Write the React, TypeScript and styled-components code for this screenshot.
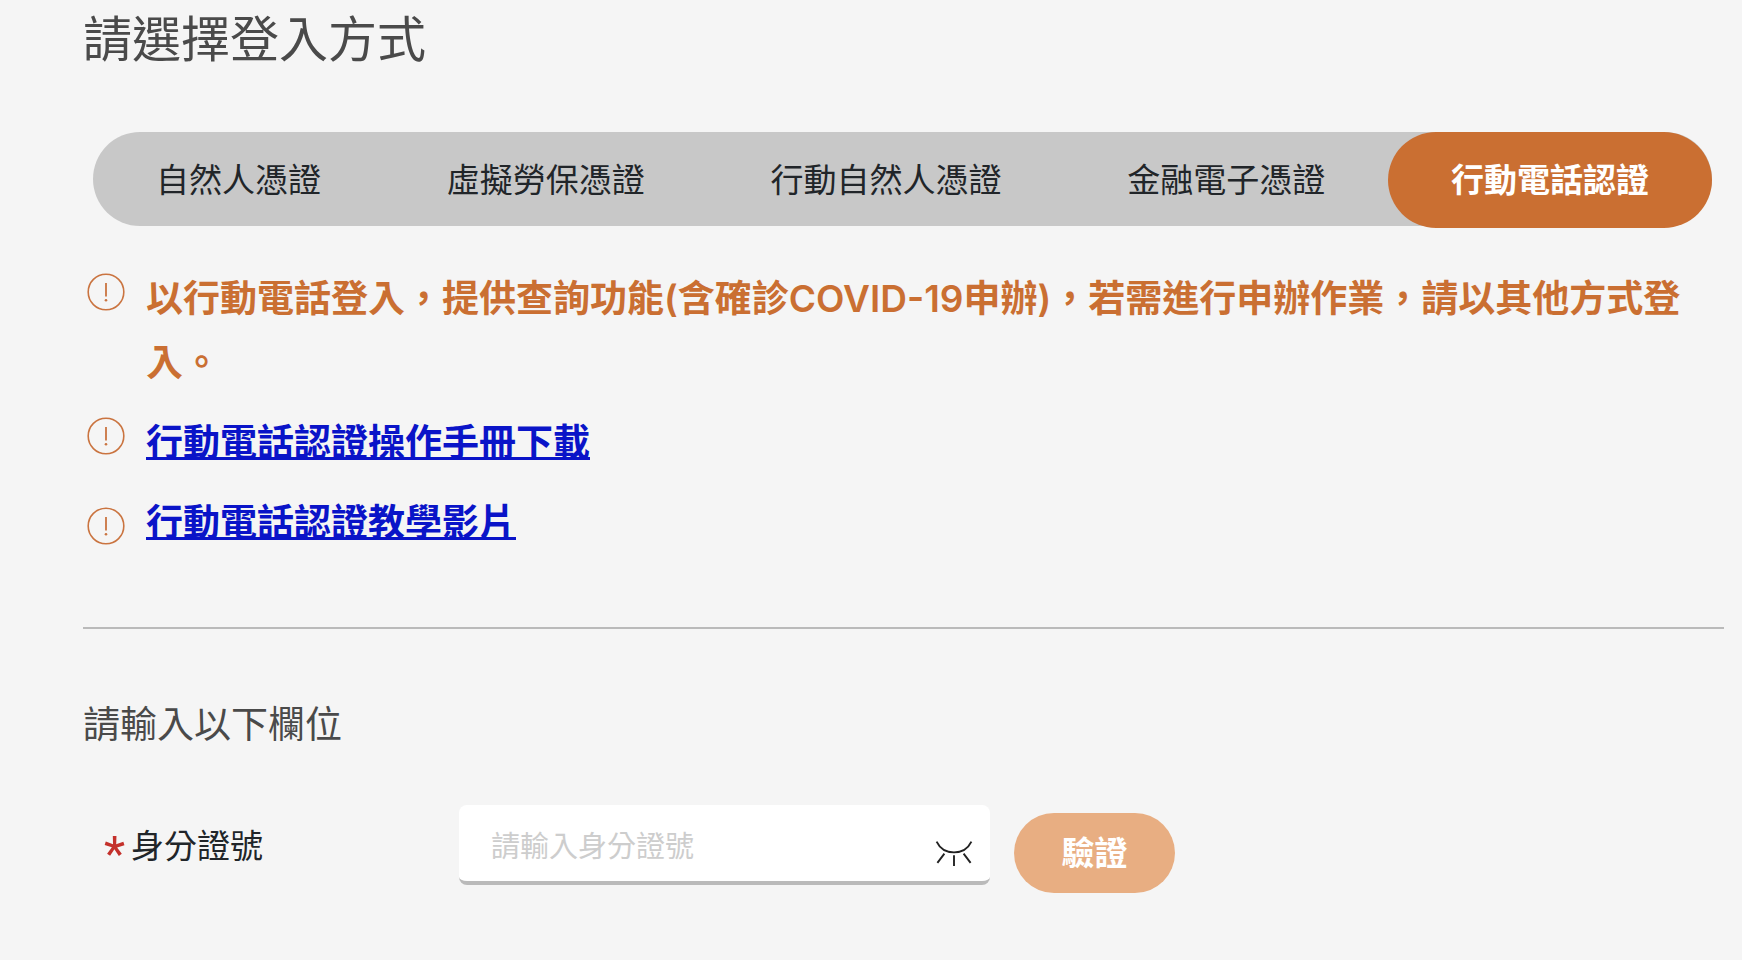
import React, { useState } from 'react';
import styled, { createGlobalStyle, css } from 'styled-components';

const GlobalStyle = createGlobalStyle`
  *, *::before, *::after { box-sizing: border-box; }
  body {
    margin: 0;
    background: #f5f5f5;
    color: #212529;
    font-family: Inter, "Noto Sans CJK TC", sans-serif;
    font-size: 33px;
    line-height: 48px;
  }
  button, input { font: inherit; }
`;

const Page = styled.main`
  padding: 0 18px 64px 83px;
`;

const Title = styled.h1`
  margin: 0;
  padding-top: 4px;
  font-size: 49px;
  font-weight: 400;
  line-height: 72px;
  color: #4a4a4a;
`;

const Tabs = styled.div`
  display: flex;
  height: 94px;
  margin: 56px 12px 0 10px;
  border-radius: 47px;
  background: #c8c8c8;
`;

const Tab = styled.button<{ $active: boolean }>`
  flex: 1 1 auto;
  height: 96px;
  padding: 0 62px;
  border: 0;
  border-radius: 48px;
  background: none;
  color: #212529;
  white-space: nowrap;
  cursor: pointer;
  ${({ $active }) =>
    $active &&
    css`
      background: #ca6f32;
      color: #fff;
      font-weight: 700;
    `}
`;

const Notices = styled.ul`
  display: flex;
  flex-direction: column;
  gap: 16px;
  margin: 0;
  padding: 41px 18px 62px 4px;
  border-bottom: 2px solid #bababa;
  list-style: none;
`;

const Notice = styled.li<{ $tall?: boolean }>`
  display: flex;
  align-items: flex-start;
  gap: 21px;
  min-height: ${({ $tall }) => ($tall ? '74px' : '64px')};
  color: #ca6f32;
  font-size: 37px;
  font-weight: 600;
  line-height: 64px;
`;

const IconSlot = styled.span<{ $tall?: boolean }>`
  display: flex;
  flex: none;
  align-items: center;
  height: ${({ $tall }) => ($tall ? '70px' : '50px')};
`;

const NoticeLink = styled.a`
  color: #0a14c8;
  text-decoration: underline;
  text-decoration-thickness: 3px;
  text-decoration-skip-ink: none;
  text-underline-offset: 1px;
`;

const Subtitle = styled.h2`
  margin: 68px 0 0;
  font-size: 37px;
  font-weight: 400;
  line-height: 56px;
  color: #4a4a4a;
`;

const FieldRow = styled.form`
  display: flex;
  align-items: flex-start;
  margin-top: 52px;
`;

const FieldLabel = styled.label`
  display: flex;
  flex: none;
  align-items: center;
  gap: 6px;
  width: 376px;
  height: 82px;
  padding-left: 21px;
`;

const Required = styled.span`
  height: 48px;
  color: #c4302b;
  font-family: Roboto, sans-serif;
  font-size: 49px;
  line-height: 64px;
`;

const InputBox = styled.div`
  display: flex;
  flex: 0 1 531px;
  align-items: center;
  min-width: 0;
  height: 80px;
  padding: 0 17px 0 32px;
  border-bottom: 4px solid #bababa;
  border-radius: 8px;
  background: #fff;
`;

const TextInput = styled.input`
  flex: 1;
  width: 100%;
  min-width: 0;
  padding: 8px 0 0;
  border: 0;
  outline: 0;
  background: none;
  color: #212529;
  font-size: 29px;
  &::placeholder { color: #cdcdcd; opacity: 1; }
`;

const EyeButton = styled.button`
  display: flex;
  flex: none;
  padding: 22px 0 0;
  border: 0;
  background: none;
  color: #222;
  cursor: pointer;
`;

const VerifyButton = styled.button`
  flex: none;
  width: 161px;
  height: 80px;
  margin: 8px 0 0 24px;
  padding: 0;
  border: 0;
  border-radius: 40px;
  background: #e8ae82;
  color: #fff;
  font-weight: 600;
  cursor: pointer;
`;

const AlertIcon = () => (
  <svg width="38" height="38" viewBox="0 0 38 38" fill="none" stroke="#ca7440" aria-hidden="true">
    <circle cx="19" cy="19" r="17.8" strokeWidth="1.6" />
    <path d="M19 10V23.5" strokeWidth="1.8" />
    <circle cx="19" cy="27.3" r="1.3" fill="#ca7440" stroke="none" />
  </svg>
);

const ClosedEyeIcon = () => (
  <svg width="38" height="26" viewBox="0 0 38 26" fill="none" stroke="currentColor" strokeWidth="1.9" aria-hidden="true">
    <path d="M1.6 .6C5 7.6 11 11.4 19 11.4S33 7.6 36.4 .6" />
    <path d="M9.4 12.6L2.4 21.8M19 14.2V25M28.6 12.6L35.6 21.8" />
  </svg>
);

const methods = ['自然人憑證', '虛擬勞保憑證', '行動自然人憑證', '金融電子憑證', '行動電話認證'];

export default function App() {
  const [active, setActive] = useState(methods.length - 1);
  const [idNumber, setIdNumber] = useState('');
  const [visible, setVisible] = useState(false);

  return (
    <Page lang="zh-Hant">
      <GlobalStyle />
      <Title>請選擇登入方式</Title>
      <Tabs role="tablist">
        {methods.map((name, i) => (
          <Tab key={name} type="button" role="tab" aria-selected={i === active} $active={i === active} onClick={() => setActive(i)}>
            {name}
          </Tab>
        ))}
      </Tabs>
      <Notices>
        <Notice>
          <IconSlot><AlertIcon /></IconSlot>
          <span>以行動電話登入，提供查詢功能(含確診COVID-19申辦)，若需進行申辦作業，請以其他方式登入。</span>
        </Notice>
        <Notice>
          <IconSlot><AlertIcon /></IconSlot>
          <NoticeLink href="#manual">行動電話認證操作手冊下載</NoticeLink>
        </Notice>
        <Notice $tall>
          <IconSlot $tall><AlertIcon /></IconSlot>
          <NoticeLink href="#video">行動電話認證教學影片</NoticeLink>
        </Notice>
      </Notices>
      <Subtitle>請輸入以下欄位</Subtitle>
      <FieldRow onSubmit={(e) => e.preventDefault()}>
        <FieldLabel htmlFor="id-number">
          <Required>*</Required>
          身分證號
        </FieldLabel>
        <InputBox>
          <TextInput
            id="id-number"
            type={visible || !idNumber ? 'text' : 'password'}
            placeholder="請輸入身分證號"
            value={idNumber}
            onChange={(e) => setIdNumber(e.target.value)}
          />
          <EyeButton type="button" aria-label="顯示身分證號" onClick={() => setVisible(!visible)}>
            <ClosedEyeIcon />
          </EyeButton>
        </InputBox>
        <VerifyButton type="submit">驗證</VerifyButton>
      </FieldRow>
    </Page>
  );
}
